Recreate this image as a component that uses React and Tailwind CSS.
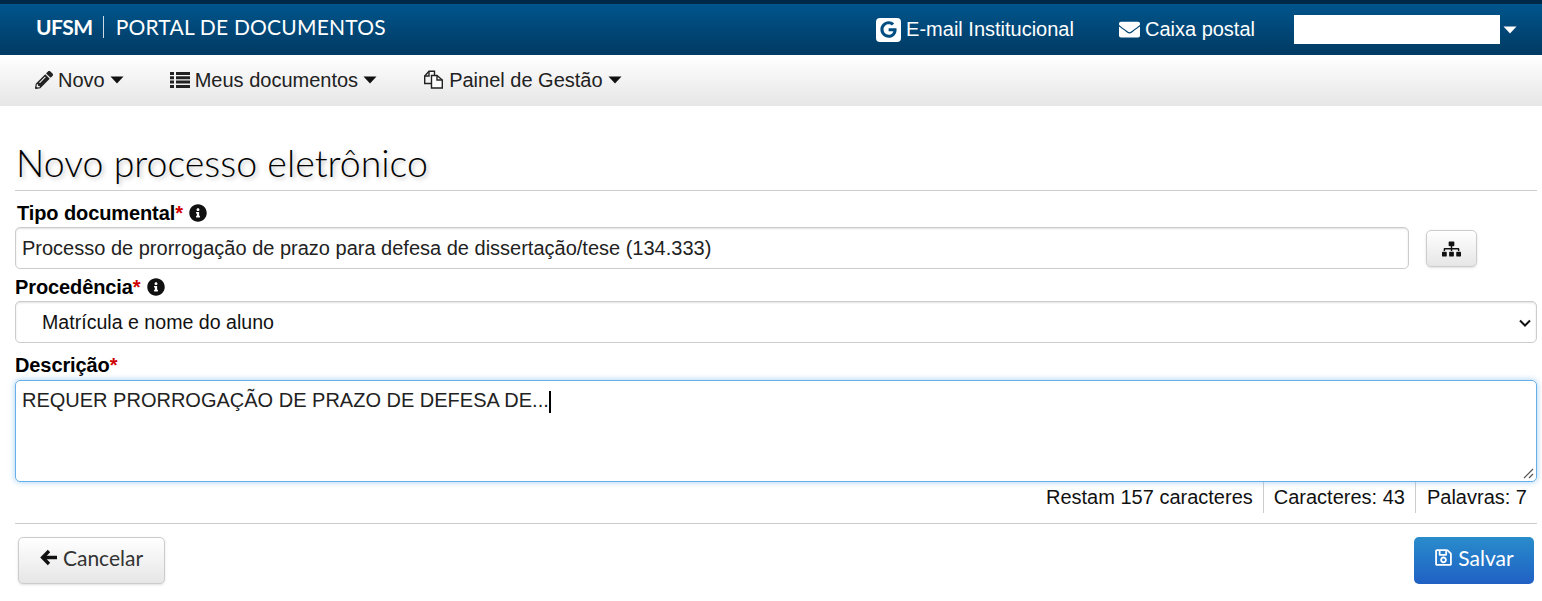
import React from 'react';
import { FaPencilAlt, FaEnvelope, FaGoogle, FaInfoCircle, FaSitemap, FaRegSave } from 'react-icons/fa';

function Caret({ className }) {
  return (
    <svg className={className} viewBox="0 0 14 8" fill="currentColor">
      <path d="M0.5 0.5 H13.5 L7 7.5 Z" />
    </svg>
  );
}

function ListIcon() {
  return (
    <svg className="w-[20px] h-[16px] text-[#222]" viewBox="0 0 20 16" fill="currentColor">
      <path d="M0 0h4v3H0zM6 0h14v3H6zM0 4.3h4v3H0zM6 4.3h14v3H6zM0 8.6h4v3H0zM6 8.6h14v3H6zM0 12.9h4v3H0zM6 12.9h14v3H6z" />
    </svg>
  );
}

function FilesIcon() {
  return (
    <svg className="w-[21px] h-[19px] text-[#222]" viewBox="0 0 20 19" fill="none" stroke="currentColor" strokeWidth="1.4">
      <path d="M8 13.5H1.2V6L5.5 1.2H11V5" />
      <path d="M5.5 1.2V6H1.2" />
      <path d="M8 5.5H13.5L18.8 10V18H8Z" fill="white" />
      <path d="M13.5 5.5V10H18.8" />
    </svg>
  );
}

function Label({ children, info, className }) {
  return (
    <div className={`flex items-center h-[24px] font-bold text-[20px] tracking-[-0.1px] text-black ${className}`}>
      <span>{children}</span>
      <span className="text-[#d00000]">*</span>
      {info && <FaInfoCircle className="ml-[6px] w-[18px] h-[18px] text-[#111]" />}
    </div>
  );
}

function MenuItem({ icon, label }) {
  return (
    <div className="flex items-center text-[20px] text-[#222]">
      {icon}
      <span className="ml-[5px]">{label}</span>
      <Caret className="ml-[5px] w-[14px] h-[8px] text-[#111]" />
    </div>
  );
}

export default function App() {
  return (
    <div className="min-h-screen bg-white font-['Liberation_Sans',Arial,sans-serif] overflow-hidden">
      <header className="h-[55px] border-t-4 border-[#012a49] bg-gradient-to-b from-[#00558c] to-[#013a63] flex items-center text-white">
        <div className="pl-[36px] flex items-center h-full pb-[5px]">
          <span className="font-['Lato',sans-serif] font-bold text-[21px] tracking-[-0.5px]">UFSM</span>
          <span className="ml-[10px] mr-[12px] w-px h-[22px] bg-white/80" />
          <span className="font-['Lato',sans-serif] text-[21px] tracking-[0.2px]">PORTAL DE DOCUMENTOS</span>
        </div>
        <div className="ml-auto flex items-center pr-[25px]">
          <span className="flex items-center justify-center w-[25px] h-[24px] bg-white rounded-[4px]">
            <FaGoogle className="w-[17px] h-[17px] text-[#004d80]" />
          </span>
          <span className="ml-[5px] text-[20px] pb-[2px]">E-mail Institucional</span>
          <FaEnvelope className="ml-[45px] w-[21px] h-[21px]" />
          <span className="ml-[5px] text-[20px] pb-[2px]">Caixa postal</span>
          <span className="ml-[39px] w-[206px] h-[29px] bg-white" />
          <Caret className="ml-[3px] w-[14px] h-[8px]" />
        </div>
      </header>

      <nav className="h-[51px] pb-[2px] bg-gradient-to-b from-white to-[#e6e6e6] flex items-center pl-[35px] gap-[46px]">
        <MenuItem icon={<FaPencilAlt className="w-[18px] h-[18px] text-[#222]" />} label="Novo" />
        <MenuItem icon={<ListIcon />} label="Meus documentos" />
        <MenuItem icon={<FilesIcon />} label="Painel de Gestão" />
      </nav>

      <main className="px-[15px] pt-[34px]">
        <h1 className="pl-[1px] h-[50px] font-['Lato',sans-serif] font-light text-[37.5px] leading-[46px] text-black [text-shadow:2px_2px_4px_rgba(0,0,0,0.25)]">
          Novo processo eletrônico
        </h1>
        <div className="mr-[-10px] border-t border-[#ccc]" />

        <Label className="mt-[10px] pl-[2px]" info>Tipo documental</Label>
        <div className="flex items-start mt-[2px]">
          <div className="w-[1394px] h-[42px] border border-[#ccc] rounded-[5px] shadow-[inset_0_1px_2px_rgba(0,0,0,0.12)] flex items-center pl-[6px] text-[20px] text-[#222]">
            Processo de prorrogação de prazo para defesa de dissertação/tese (134.333)
          </div>
          <button className="ml-[17px] mt-[3px] w-[51px] h-[37px] border border-[#ccc] rounded-[5px] bg-gradient-to-b from-white to-[#e6e6e6] shadow-sm flex items-center justify-center">
            <FaSitemap className="w-[19px] h-[18px] text-[#111]" />
          </button>
        </div>

        <Label className="mt-[6px]" info>Procedência</Label>
        <div className="mt-[2px] h-[42px] pt-[2px] border border-[#ccc] rounded-[5px] shadow-[inset_0_1px_2px_rgba(0,0,0,0.12)] flex items-center pl-[26px] pr-[5px] text-[19.6px] text-[#111] mr-[-10px]">
          <span>Matrícula e nome do aluno</span>
          <svg className="ml-auto w-[12px] h-[8px]" viewBox="0 0 12 8" fill="none" stroke="#111" strokeWidth="2">
            <path d="M1 1.5 L6 6.5 L11 1.5" />
          </svg>
        </div>

        <Label className="mt-[10px]">Descrição</Label>
        <div className="relative mt-[3px] h-[102px] mr-[-10px] border border-[#66afe9] rounded-[5px] shadow-[0_0_6px_rgba(102,175,233,0.6)] pl-[6px] pt-[6px] text-[20px] leading-[26px] text-[#222]">
          <span>REQUER PRORROGAÇÃO DE PRAZO DE DEFESA DE...</span>
          <span className="inline-block w-[2px] h-[22px] bg-black align-middle" />
          <svg className="absolute right-[2px] bottom-[2px] w-[12px] h-[12px]" viewBox="0 0 12 12" stroke="#555" strokeWidth="1.2">
            <path d="M2 11 L11 2 M7 11 L11 7" />
          </svg>
        </div>

        <div className="flex justify-end h-[31px] mr-[-9px] text-[20px] text-[#111]">
          <span className="flex items-center pr-[10px] pb-[2px]">Restam 157 caracteres</span>
          <span className="flex items-center pl-[10px] pr-[10px] pb-[2px] border-l border-[#ccc]">Caracteres: 43</span>
          <span className="flex items-center pl-[11px] pr-[9px] pb-[2px] border-l border-[#ccc]">Palavras: 7</span>
        </div>

        <div className="mt-[10px] mr-[-10px] border-t border-[#ccc]" />

        <div className="flex justify-between mt-[13px] mr-[-7px] pl-[3px] font-['Lato',sans-serif] text-[21px]">
          <button className="w-[147px] h-[47px] pb-[6px] border border-[#ccc] rounded-[5px] bg-gradient-to-b from-white to-[#e6e6e6] shadow-sm flex items-center justify-center text-[#333]">
            <svg className="w-[17px] h-[17px] mr-[6px] text-[#111]" viewBox="0 0 17 17" fill="none" stroke="currentColor" strokeWidth="3.4">
              <path d="M9 2 L2.6 8.5 L9 15 M3 8.5 H17" />
            </svg>
            Cancelar
          </button>
          <button className="w-[120px] h-[47px] pb-[6px] rounded-[5px] bg-gradient-to-b from-[#2a8ccb] to-[#2160c4] flex items-center justify-center text-white">
            <FaRegSave className="w-[19px] h-[19px] mr-[5px]" />
            Salvar
          </button>
        </div>
      </main>
    </div>
  );
}
